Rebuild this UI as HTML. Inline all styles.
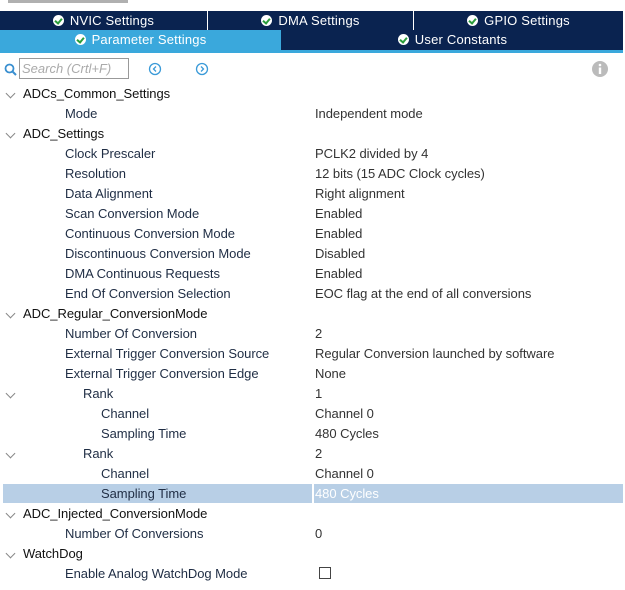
<!DOCTYPE html>
<html><head><style>
body{margin:0;width:625px;height:590px;background:#fff;font-family:"Liberation Sans",sans-serif;font-size:13px;position:relative;overflow:hidden}
.abs{position:absolute}
.tab{position:absolute;color:#fff;font-size:13px;text-align:center;line-height:19px;height:19px;letter-spacing:0.2px}
.ck{display:inline-block;width:11px;height:11px;border-radius:50%;background:#fff;vertical-align:-1px;margin-right:6px;position:relative}
.ck:after{content:"";position:absolute;left:3px;top:2px;width:3px;height:5px;border:solid #2a9d3a;border-width:0 2px 2px 0;transform:rotate(40deg)}
.row{position:absolute;left:0;width:625px;height:20px;line-height:20px;color:#1f2d44;letter-spacing:-0.05px}
.row .l{position:absolute}
.row .v{position:absolute;left:315px;color:#333}
.chev{position:absolute;left:7px;top:6px;width:6px;height:6px;border:solid #888;border-width:0 1px 1px 0;transform:rotate(45deg)}
.g{color:#111}
</style></head><body>
<div class="abs" style="left:8px;top:0;width:120px;height:3px;background:#b0b0b0"></div>
<div class="abs" style="left:0;top:11px;width:623px;height:39px;background:#0a2350"></div>
<div class="tab" style="left:0;top:11px;width:207px"><span class="ck"></span>NVIC Settings</div>
<div class="abs" style="left:207px;top:11px;width:1px;height:19px;background:#fff"></div>
<div class="tab" style="left:208px;top:11px;width:205px"><span class="ck"></span>DMA Settings</div>
<div class="abs" style="left:413px;top:11px;width:1px;height:19px;background:#fff"></div>
<div class="tab" style="left:414px;top:11px;width:209px"><span class="ck"></span>GPIO Settings</div>
<div class="tab" style="left:0;top:30px;width:281px;background:#3aa8dc;height:20px;line-height:20px"><span class="ck"></span>Parameter Settings</div>
<div class="tab" style="left:282px;top:30px;width:341px;height:20px;line-height:20px"><span class="ck"></span>User Constants</div>
<div class="abs" style="left:0;top:50px;width:623px;height:3px;background:#3aa8dc"></div>
<svg class="abs" style="left:4px;top:63px" width="14" height="14"><circle cx="5.5" cy="5.5" r="4" fill="none" stroke="#3a8fd0" stroke-width="1.8"/><line x1="8.5" y1="8.5" x2="12" y2="12" stroke="#3a8fd0" stroke-width="2"/></svg>
<div class="abs" style="left:19px;top:58px;width:110px;height:21px;border:1px solid #999;box-sizing:border-box;color:#aaa;font-style:italic;line-height:19px;padding-left:2px">Search (Crtl+F)</div>
<svg class="abs" style="left:148px;top:62px" width="14" height="14"><circle cx="7" cy="7" r="5.5" fill="none" stroke="#3a9ad8" stroke-width="1.3"/><path d="M8 4.5L5.5 7L8 9.5" fill="none" stroke="#3a9ad8" stroke-width="1.3"/></svg>
<svg class="abs" style="left:195px;top:62px" width="14" height="14"><circle cx="7" cy="7" r="5.5" fill="none" stroke="#3a9ad8" stroke-width="1.3"/><path d="M6 4.5L8.5 7L6 9.5" fill="none" stroke="#3a9ad8" stroke-width="1.3"/></svg>
<svg class="abs" style="left:592px;top:61px" width="16" height="16"><circle cx="8" cy="8" r="8" fill="#bbb"/><circle cx="8" cy="4" r="1.3" fill="#fff"/><rect x="6.8" y="6.5" width="2.4" height="6.5" fill="#fff"/></svg>

<div class="abs" style="left:3px;top:484px;width:620px;height:19px;background:#b8cfe6"></div>
<div class="abs" style="left:312px;top:484px;width:2px;height:19px;background:#fff"></div>

<div class="row" style="top:84px"><i class="chev"></i><span class="l g" style="left:23px">ADCs_Common_Settings</span></div>
<div class="row" style="top:104px"><span class="l" style="left:65px">Mode</span><span class="v">Independent mode</span></div>
<div class="row" style="top:124px"><i class="chev"></i><span class="l g" style="left:23px">ADC_Settings</span></div>
<div class="row" style="top:144px"><span class="l" style="left:65px">Clock Prescaler</span><span class="v">PCLK2 divided by 4</span></div>
<div class="row" style="top:164px"><span class="l" style="left:65px">Resolution</span><span class="v">12 bits (15 ADC Clock cycles)</span></div>
<div class="row" style="top:184px"><span class="l" style="left:65px">Data Alignment</span><span class="v">Right alignment</span></div>
<div class="row" style="top:204px"><span class="l" style="left:65px">Scan Conversion Mode</span><span class="v">Enabled</span></div>
<div class="row" style="top:224px"><span class="l" style="left:65px">Continuous Conversion Mode</span><span class="v">Enabled</span></div>
<div class="row" style="top:244px"><span class="l" style="left:65px">Discontinuous Conversion Mode</span><span class="v">Disabled</span></div>
<div class="row" style="top:264px"><span class="l" style="left:65px">DMA Continuous Requests</span><span class="v">Enabled</span></div>
<div class="row" style="top:284px"><span class="l" style="left:65px">End Of Conversion Selection</span><span class="v">EOC flag at the end of all conversions</span></div>
<div class="row" style="top:304px"><i class="chev"></i><span class="l g" style="left:23px">ADC_Regular_ConversionMode</span></div>
<div class="row" style="top:324px"><span class="l" style="left:65px">Number Of Conversion</span><span class="v">2</span></div>
<div class="row" style="top:344px"><span class="l" style="left:65px">External Trigger Conversion Source</span><span class="v">Regular Conversion launched by software</span></div>
<div class="row" style="top:364px"><span class="l" style="left:65px">External Trigger Conversion Edge</span><span class="v">None</span></div>
<div class="row" style="top:384px"><i class="chev"></i><span class="l" style="left:83px">Rank</span><span class="v">1</span></div>
<div class="row" style="top:404px"><span class="l" style="left:101px">Channel</span><span class="v">Channel 0</span></div>
<div class="row" style="top:424px"><span class="l" style="left:101px">Sampling Time</span><span class="v">480 Cycles</span></div>
<div class="row" style="top:444px"><i class="chev"></i><span class="l" style="left:83px">Rank</span><span class="v">2</span></div>
<div class="row" style="top:464px"><span class="l" style="left:101px">Channel</span><span class="v">Channel 0</span></div>
<div class="row" style="top:484px"><span class="l" style="left:101px">Sampling Time</span><span class="v" style="color:#fff">480 Cycles</span></div>
<div class="row" style="top:504px"><i class="chev"></i><span class="l g" style="left:23px">ADC_Injected_ConversionMode</span></div>
<div class="row" style="top:524px"><span class="l" style="left:65px">Number Of Conversions</span><span class="v">0</span></div>
<div class="row" style="top:544px"><i class="chev"></i><span class="l g" style="left:23px">WatchDog</span></div>
<div class="row" style="top:564px"><span class="l" style="left:65px">Enable Analog WatchDog Mode</span><span class="abs" style="left:319px;top:3px;width:10px;height:10px;border:1px solid #444"></span></div>
</body></html>
